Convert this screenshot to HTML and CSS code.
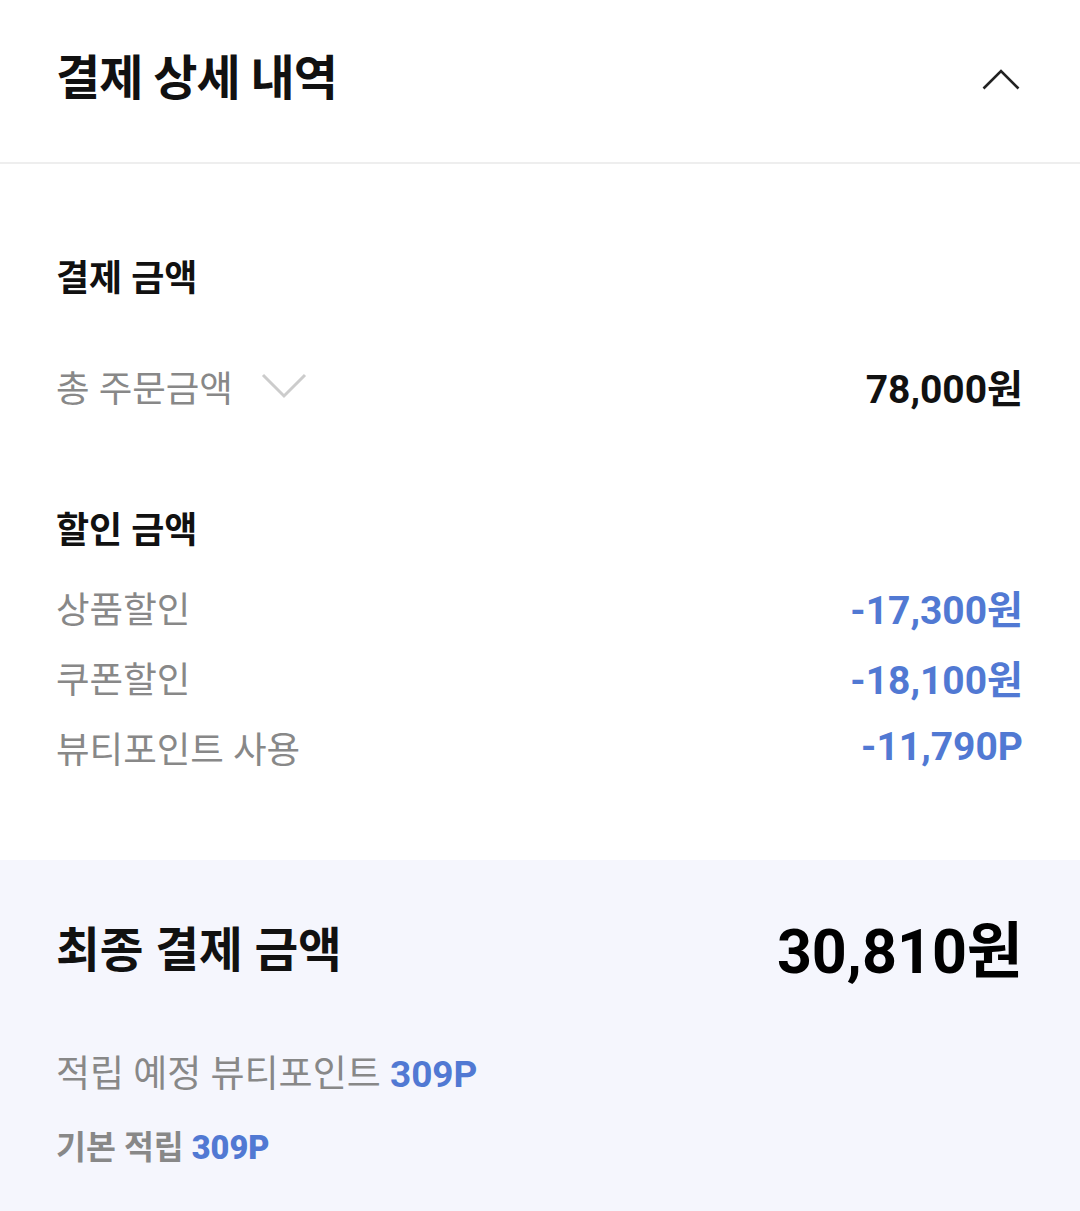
FILE: index.html
```html
<!DOCTYPE html>
<html lang="ko">
<head>
    <meta charset="UTF-8">
    <meta name="viewport" content="width=device-width, initial-scale=1.0">
    <title>결제 상세 내역</title>
    <link rel="stylesheet" href="styles.css">
</head>
<body>
    <div class="page">
        <div class="header">
            <h1 class="title">결제 상세 내역</h1>
            <svg class="toggle" width="38" height="22" viewBox="0 0 38 22">
                <polyline points="1.5,20.5 19,3 36.5,20.5" fill="none" stroke="#222" stroke-width="2.6"/>
            </svg>
        </div>

        <div class="details">
            <h2 class="section-title">결제 금액</h2>
            <div class="row total-row">
                <span class="label">총 주문금액
                    <svg class="more" width="46" height="28" viewBox="0 0 46 28">
                        <polyline points="2,3 23,24 44,3" fill="none" stroke="#cccccc" stroke-width="3"/>
                    </svg>
                </span>
                <span class="amount">78,000원</span>
            </div>

            <h2 class="section-title discount-title">할인 금액</h2>
            <ul class="discounts">
                <li class="row"><span class="label">상품할인</span><span class="amount blue">-17,300원</span></li>
                <li class="row"><span class="label">쿠폰할인</span><span class="amount blue">-18,100원</span></li>
                <li class="row"><span class="label">뷰티포인트 사용</span><span class="amount blue">-11,790P</span></li>
            </ul>
        </div>

        <div class="summary">
            <div class="row final-row">
                <span class="final-label">최종 결제 금액</span>
                <span class="final-amount">30,810원</span>
            </div>
            <p class="points">적립 예정 뷰티포인트 <b>309P</b></p>
            <p class="points-sub">기본 적립 <b>309P</b></p>
        </div>
    </div>
</body>
</html>
```

FILE: styles.css
```css
body {
    margin: 0;
    font-family: "Roboto", "Noto Sans CJK KR", sans-serif;
    background: #ffffff;
    color: #111;
}
.page {
    width: 1080px;
    height: 1211px;
    display: flex;
    flex-direction: column;
}
.header {
    flex-shrink: 0;
    height: 164px;
    padding: 0 60px 4px 56px;
    box-sizing: border-box;
    display: flex;
    align-items: center;
    justify-content: space-between;
    border-bottom: 2px solid #eeeeee;
}
.title {
    margin: 0;
    font-size: 48px;
    font-weight: 700;
    line-height: 56px;
    color: #111;
    letter-spacing: -1px;
}
.details {
    flex-shrink: 0;
    padding: 94px 57px 0 56px;
    height: 696px;
    box-sizing: border-box;
}
.section-title {
    margin: 0;
    font-size: 36px;
    font-weight: 700;
    line-height: 42px;
    color: #111;
}
.row {
    display: flex;
    justify-content: space-between;
    align-items: center;
}
.label {
    font-size: 36.5px;
    color: #888;
    display: flex;
    align-items: center;
}
.amount {
    font-size: 39px;
    font-weight: 700;
    color: #111;
}
.amount.blue {
    color: #5179d3;
}
.total-row {
    margin-top: 61px;
    height: 50px;
}
.more {
    margin-left: 28px;
}
.discount-title {
    margin-top: 99px;
}
.discounts {
    list-style: none;
    margin: 30px 0 0;
    padding: 0;
}
.discounts .row {
    height: 50px;
    margin-bottom: 20px;
}
.summary {
    flex: 1;
    background: #f5f6fd;
    padding: 48px 57px 0 56px;
}
.final-row {
    height: 76px;
}
.final-label {
    font-size: 47.5px;
    font-weight: 700;
    color: #111;
}
.final-amount {
    font-size: 61px;
    font-weight: 700;
    color: #000;
}
.points {
    margin: 68px 0 0;
    font-size: 37px;
    color: #888;
    line-height: 46px;
}
.points b, .points-sub b {
    color: #5179d3;
}
.points-sub {
    margin: 30px 0 0;
    font-size: 32.5px;
    font-weight: 700;
    color: #888;
    line-height: 40px;
}
```
